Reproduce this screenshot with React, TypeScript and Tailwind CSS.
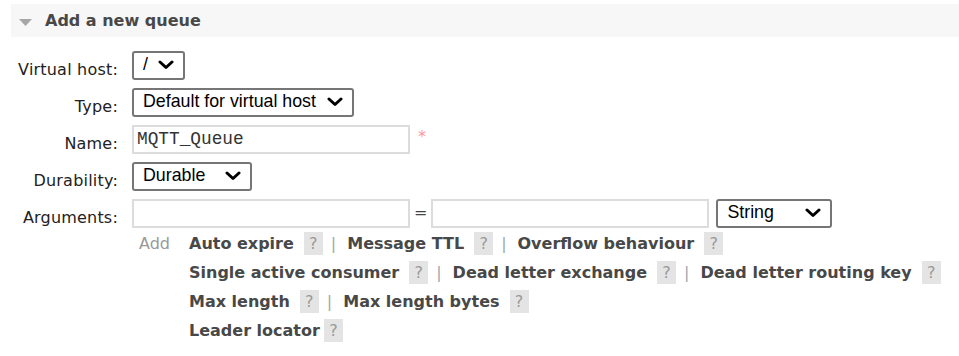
import React from "react";

const Chevron = () => (
  <svg width="16" height="10" viewBox="0 0 16 10" className="shrink-0">
    <polyline points="2,2 8,7.5 14,2" fill="none" stroke="#000" strokeWidth="3" strokeLinecap="round" strokeLinejoin="round" />
  </svg>
);

const Select = ({ value, width }: { value: string; width: string }) => (
  <div
    className={`${width} h-[28.5px] flex items-center justify-between pl-[9px] pr-[9px] border-2 border-[#767676] rounded-[3px] bg-white text-black text-[17.8px] leading-none font-['Liberation_Sans',Arial,sans-serif]`}
  >
    <span>{value}</span>
    <Chevron />
  </div>
);

const Input = ({ value }: { value?: string }) => (
  <div className="w-[278px] h-[29px] flex items-center pl-[3px] border-2 border-[#dcdcdc] bg-white text-[#333] text-[17.8px] leading-none font-['Liberation_Mono','Courier_New',monospace]">
    {value}
  </div>
);

const Help = ({ ml = "ml-[10px]" }: { ml?: string }) => (
  <span className={`${ml} w-[19px] h-[23px] flex items-center justify-center bg-[#e4e4e4] text-[#999] font-normal leading-[20px]`}>
    ?
  </span>
);

const Sep = () => <span className="ml-[8px] mr-[11px] text-[#9aa] font-normal leading-[20px]">|</span>;

const Row = ({ label, children }: { label: string; children: React.ReactNode }) => (
  <div className="flex h-[37px]">
    <div className="w-[118px] text-right pt-[13px] leading-[20px] text-[#222] tracking-[0.2px]">{label}</div>
    <div className="pl-[14px] pt-[4px] flex items-start">{children}</div>
  </div>
);

const Link = ({ children }: { children: React.ReactNode }) => (
  <span className="font-bold text-[#484848] leading-[20px] whitespace-nowrap">{children}</span>
);

export default function App() {
  return (
    <div className="w-[959px] h-[356px] bg-white font-['DejaVu_Sans',Verdana,sans-serif] text-[16px] overflow-hidden">
      <div className="pl-[11px] pt-[4px]">
        <div className="h-[33px] bg-[#f7f7f7] flex items-center pl-[8px]">
          <svg width="13" height="7" viewBox="0 0 13 7" className="mt-[3px]">
            <polygon points="0,0 13,0 6.5,7" fill="#a6a6a6" />
          </svg>
          <span className="ml-[13px] font-bold text-[#484848] leading-[20px]">Add a new queue</span>
        </div>
      </div>

      <div className="mt-[10px]">
        <Row label="Virtual host:">
          <Select value="/" width="w-[53px]" />
        </Row>
        <Row label="Type:">
          <Select value="Default for virtual host" width="w-[222px]" />
        </Row>
        <Row label="Name:">
          <Input value="MQTT_Queue" />
          <span className="ml-[8px] mt-[2px] text-[#f99] leading-[20px]">*</span>
        </Row>
        <Row label="Durability:">
          <Select value="Durable" width="w-[120px]" />
        </Row>
        <Row label="Arguments:">
          <Input />
          <span className="mx-[4px] mt-[4px] text-[#444] leading-[20px]">=</span>
          <Input />
          <span className="w-[7px]" />
          <Select value="String" width="w-[116px]" />
        </Row>
      </div>

      <div className="flex pl-[139px] -mt-[3px]">
        <div className="w-[50px] h-[29px] flex items-center text-[#999] leading-[20px]">Add</div>
        <div className="flex flex-col">
          <div className="h-[29px] flex items-center">
            <Link>Auto expire</Link>
            <Help />
            <Sep />
            <Link>Message TTL</Link>
            <Help />
            <Sep />
            <Link>Overflow behaviour</Link>
            <Help />
          </div>
          <div className="h-[29px] flex items-center">
            <Link>Single active consumer</Link>
            <Help />
            <Sep />
            <Link>Dead letter exchange</Link>
            <Help />
            <Sep />
            <Link>Dead letter routing key</Link>
            <Help />
          </div>
          <div className="h-[29px] flex items-center">
            <Link>Max length</Link>
            <Help />
            <Sep />
            <Link>Max length bytes</Link>
            <Help />
          </div>
          <div className="h-[29px] flex items-center">
            <Link>Leader locator</Link>
            <Help ml="ml-[4px]" />
          </div>
        </div>
      </div>
    </div>
  );
}
